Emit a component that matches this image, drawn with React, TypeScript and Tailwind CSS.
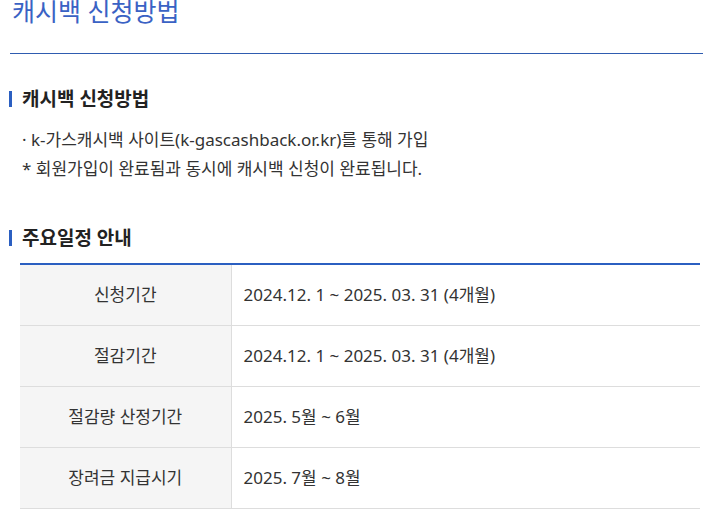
import React from 'react';

const rows = [
  { label: '신청기간', value: '2024.12. 1 ~ 2025. 03. 31 (4개월)' },
  { label: '절감기간', value: '2024.12. 1 ~ 2025. 03. 31 (4개월)' },
  { label: '절감량 산정기간', value: '2025. 5월 ~ 6월' },
  { label: '장려금 지급시기', value: '2025. 7월 ~ 8월' },
];

const SectionTitle = ({ children }: { children: React.ReactNode }) => (
  <h3 className="flex items-center gap-[10px] text-[19px] font-bold leading-[24px] text-[#222]">
    <span className="h-[16px] w-[3px] bg-[#2b5fc1]" />
    {children}
  </h3>
);

export default function App() {
  return (
    <div className="w-[703px] h-[513px] overflow-hidden bg-white pl-[9px] font-['Noto_Sans','Noto_Sans_CJK_KR',sans-serif] text-[#333]">
      <div className="ml-px h-[54px] overflow-hidden border-b border-[#2f5cb0]">
        <h2 className="-mt-[6px] pl-[2px] text-[25px] leading-[34px] text-[#3a62c4]">캐시백 신청방법</h2>
      </div>

      <section className="pt-[33px]">
        <SectionTitle>캐시백 신청방법</SectionTitle>
        <div className="mt-[14px] pl-[13px] text-[17px] leading-[29px] text-[#333]">
          <p>· k-가스캐시백 사이트(k-gascashback.or.kr)를 통해 가입</p>
          <p>* 회원가입이 완료됨과 동시에 캐시백 신청이 완료됩니다.</p>
        </div>
      </section>

      <section className="pt-[43px]">
        <SectionTitle>주요일정 안내</SectionTitle>
        <table className="mt-[13px] ml-[11px] w-[680px] border-collapse border-t-2 border-[#2b5fc1] text-[17px]">
          <tbody>
            {rows.map((r) => (
              <tr key={r.label} className="h-[61px] border-b border-[#dddddd]">
                <th className="w-[211px] border-r border-[#dddddd] bg-[#f5f5f5] text-center font-normal text-[#333]">
                  {r.label}
                </th>
                <td className="pl-[12px] text-left text-[#333]">{r.value}</td>
              </tr>
            ))}
          </tbody>
        </table>
      </section>
    </div>
  );
}
